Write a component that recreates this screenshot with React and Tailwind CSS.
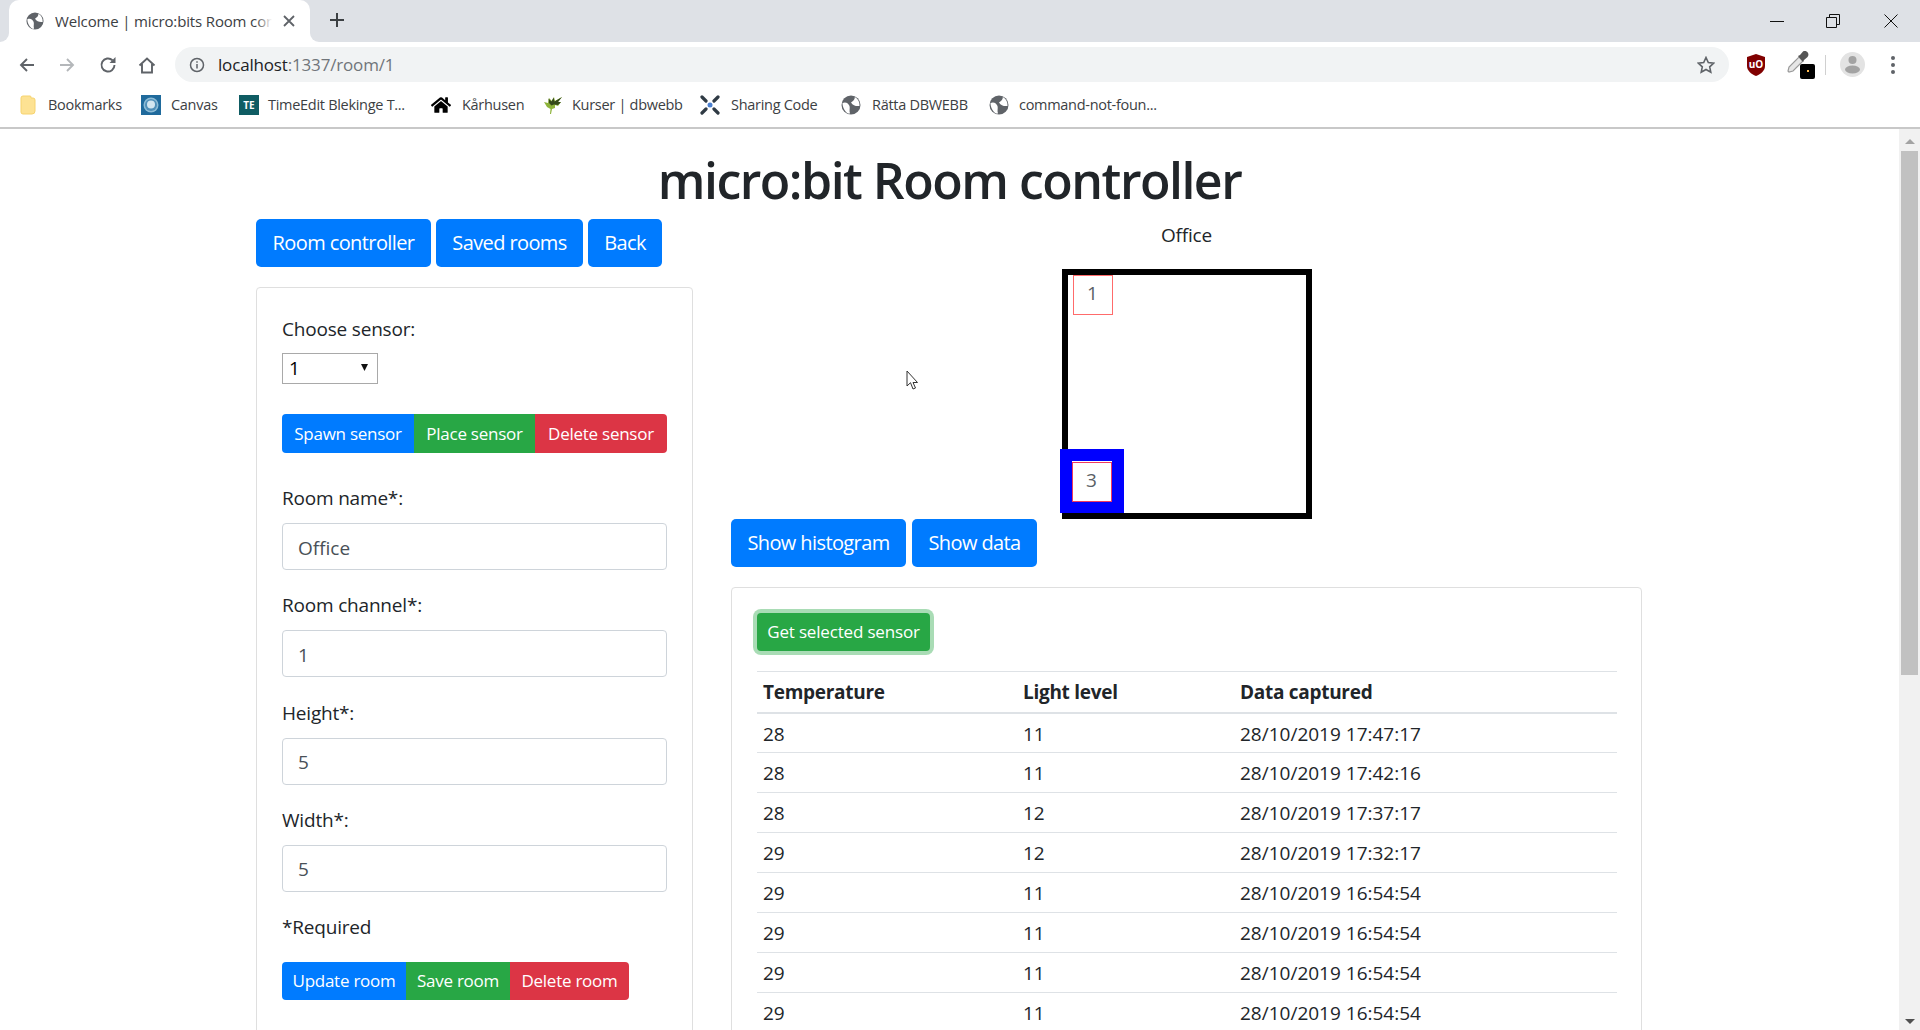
import React from 'react';
import { FaHome } from 'react-icons/fa';

/* ── browser chrome drawings ── */
const ChromeGlobe = ({ className = 'w-5 h-5' }) => (
  <svg className={className} viewBox="0 0 20 20">
    <circle cx="10" cy="10" r="9.5" fill="#5f6368" />
    <path fill="#fff" d="M1.500 8C5 6.500 7.500 8.500 8.500 11c.7 2.500-.5 4.500.5 7.500l-2 0C4 16.500 1.500 12.500 1.500 8zM10 7.500C12.500 6 14 4 13.800 2c3 1.500 5 5 4.700 9-3.500.5-6.500-.5-8.500-3.500z" />
  </svg>
);

const FolderIcon = () => (
  <svg className="w-4 h-5" viewBox="0 0 16 20">
    <path fill="#fde293" stroke="#f6d36e" strokeWidth="1" d="M1 3a2 2 0 0 1 2-2h7a1 1 0 0 1 1 1v1h2a2 2 0 0 1 2 2v11a3 3 0 0 1-3 3H3a2 2 0 0 1-2-2z" />
  </svg>
);

const CanvasIcon = () => (
  <svg className="w-5 h-5" viewBox="0 0 20 20">
    <rect width="20" height="20" fill="#1f6a9c" />
    <circle cx="10" cy="10" r="7.500" fill="#8dbcd6" />
    <circle cx="10" cy="10" r="6" fill="#4f8fb8" />
    <circle cx="10" cy="9.500" r="4" fill="#d3e6f0" />
  </svg>
);

const TimeEditIcon = () => (
  <div className="w-5 h-5 bg-[#0f5c63] flex items-center justify-center text-white text-[10px] font-bold leading-none">TE</div>
);

const LeafIcon = () => (
  <svg className="w-5 h-5" viewBox="0 0 20 20">
    <path fill="#8db33a" d="M19 2 15 7l3 0-3 4-3-1 0 3-3 1-1 5-1 0 .5-5-3.500-2-3-5 4 1 1-5 3 3 2-4 1 4z" />
    <path fill="#34491a" d="M19 2 15 7l3 0-3 3-4-.5-2.500 1L6 8 5.500 3.500l3 3 2-4 1 4z" />
  </svg>
);

const SharingIcon = () => (
  <svg className="w-5 h-5" viewBox="0 0 20 20">
    <g stroke="#2f3a44" strokeWidth="3.200" strokeLinecap="round">
      <path d="M2 2 6 6M18 2l-4 4M2 18l4-4M18 18l-4-4" />
    </g>
    <circle cx="10" cy="10" r="2.500" fill="#4a7fd0" />
  </svg>
);

const ShieldIcon = () => (
  <svg className="w-[20px] h-[22px]" viewBox="0 0 20 22">
    <path fill="#800000" d="M10 0 19 3v9c0 4.500-4 8-9 10C5 20 1 16.500 1 12V3z" />
    <text x="10" y="13.500" textAnchor="middle" fill="#fff" fontSize="10" fontWeight="700" fontFamily="Open Sans, sans-serif">uO</text>
  </svg>
);

const DropperIcon = () => (
  <div className="relative w-[28px] h-[28px]">
    <svg className="w-[22px] h-[22px]" viewBox="0 0 22 22">
      <path fill="#e6e6e6" stroke="#9a9a9a" strokeWidth="1.200" d="M12 6 16 10 6 20l-4 1-1-1 1-4z" />
      <path fill="#555" d="m11 5 2-1 3-3.500c1.500-1 4-.5 5 1.500s0 3.500-1 4.500L17 9l-1 2z" />
    </svg>
    <div className="absolute right-0 bottom-0 w-[15px] h-[15px] rounded-[2px] bg-black flex items-center justify-center">
      <div className="w-[2px] h-[2px] bg-[#ffb84d]" />
    </div>
  </div>
);

const Avatar = () => (
  <svg className="w-[25px] h-[25px]" viewBox="0 0 25 25">
    <circle cx="12.500" cy="12.500" r="12.500" fill="#e3e3e3" />
    <circle cx="12.500" cy="8" r="4" fill="#a3a3a3" />
    <ellipse cx="12.500" cy="17.500" rx="7.500" ry="4" fill="#a3a3a3" />
  </svg>
);

const NavIcon = ({ d, stroke = '#5f6368', children }) => (
  <svg className="w-[18px] h-[18px]" viewBox="0 0 18 18" fill="none" stroke={stroke} strokeWidth="1.900">
    <path d={d} />
    {children}
  </svg>
);

const bookmarks = [
  { label: 'Bookmarks', icon: <FolderIcon />, width: 'w-[121px]', gap: 'ml-[12px]' },
  { label: 'Canvas', icon: <CanvasIcon />, width: 'w-[98px]', gap: 'ml-[10px]' },
  { label: 'TimeEdit Blekinge T...', icon: <TimeEditIcon />, width: 'w-[192px]', gap: 'ml-[9px]' },
  { label: 'Kårhusen', icon: <FaHome className="w-5 h-5 text-black" />, width: 'w-[112px]', gap: 'ml-[11px]' },
  { label: 'Kurser | dbwebb', icon: <LeafIcon />, width: 'w-[157px]', gap: 'ml-[9px]' },
  { label: 'Sharing Code', icon: <SharingIcon />, width: 'w-[141px]', gap: 'ml-[11px]' },
  { label: 'Rätta DBWEBB', icon: <ChromeGlobe />, width: 'w-[148px]', gap: 'ml-[11px]' },
  { label: 'command-not-foun...', icon: <ChromeGlobe />, width: 'w-[180px]', gap: 'ml-[10px]' },
];

const BrowserChrome = () => (
  <div className="shrink-0 bg-white border-b-2 border-[#c8c8c8]">
    {/* tab strip */}
    <div className="h-[42px] bg-[#dee1e6] flex">
      <div className="w-[9px] bg-white"><div className="h-full bg-[#dee1e6] rounded-br-[9px]" /></div>
      <div className="w-[301px] h-[42px] bg-white rounded-t-[10px] flex items-center pl-[17px]">
        <ChromeGlobe className="w-[18px] h-[18px] shrink-0" />
        <div className="relative ml-[11px] w-[217px] overflow-hidden whitespace-nowrap text-[15px] tracking-[-0.01em] text-[#3c4043]">
          Welcome | micro:bits Room contr
          <div className="absolute right-0 top-0 bottom-0 w-[16px] bg-gradient-to-r from-transparent to-white" />
        </div>
        <svg className="ml-[11px] w-3 h-3 shrink-0" viewBox="0 0 12 12" stroke="#5f6368" strokeWidth="1.800"><path d="m1 1 10 10M11 1 1 11" /></svg>
      </div>
      <div className="flex-1 bg-white">
        <div className="h-full bg-[#dee1e6] rounded-bl-[9px] flex items-center">
          <svg className="ml-[19px] mb-[3px] w-[16px] h-[16px]" viewBox="0 0 16 16" stroke="#3c4043" strokeWidth="2"><path d="M8 1v14M1 8h14" /></svg>
          <div className="ml-auto flex items-center">
            <svg className="w-[14px] h-[14px]" viewBox="0 0 14 14" stroke="#111" strokeWidth="1"><path d="M0 7.500h14" /></svg>
            <svg className="ml-[42px] w-[14px] h-[14px]" viewBox="0 0 14 14" fill="none" stroke="#111" strokeWidth="1"><path d="M.5 3.500h10v10H.5zM3.500 3.500V.5h10v10h-3" /></svg>
            <svg className="ml-[44px] mr-[22px] w-[14px] h-[14px]" viewBox="0 0 14 14" stroke="#111" strokeWidth="1"><path d="m.5.5 13 13M13.500.5l-13 13" /></svg>
          </div>
        </div>
      </div>
    </div>
    {/* toolbar */}
    <div className="h-[43px] pt-[2px] flex items-center">
      <div className="pl-[18px] flex items-center">
        <NavIcon d="M16 9H3M9 3 3 9l6 6" />
        <div className="ml-[22px]"><NavIcon d="M2 9h13M9 3l6 6-6 6" stroke="#b4b7ba" /></div>
        <div className="ml-[23px]">
          <NavIcon d="M15.500 9A6.500 6.500 0 1 1 13.500 4.300">
            <path d="M16.500 1v6h-6z" fill="#5f6368" stroke="none" />
          </NavIcon>
        </div>
        <div className="ml-[21px]"><NavIcon d="M1.500 9.500 9 2.500l7.500 7M4 8v8.500h10V8" /></div>
      </div>
      <div className="ml-[19px] w-[1554px] h-[35px] rounded-full bg-[#f1f3f4] flex items-center pl-[14px]">
        <svg className="w-4 h-4 shrink-0" viewBox="0 0 16 16" fill="none" stroke="#5f6368" strokeWidth="1.500">
          <circle cx="8" cy="8" r="6.500" /><path d="M8 7v4.500M8 4.200v1.600" />
        </svg>
        <div className="ml-[13px] text-[17px] tracking-[-0.01em] text-[#202124]">localhost<span className="text-[#70757a]">:1337/room/1</span></div>
        <svg className="ml-auto mr-[14px] w-[18px] h-[18px]" viewBox="0 0 18 18" fill="none" stroke="#5f6368" strokeWidth="1.600"><path d="m9 1.500 2.300 5 5.400.6-4 3.700 1.100 5.400L9 13.500l-4.800 2.700 1.100-5.400-4-3.700 5.400-.6z" /></svg>
      </div>
      <div className="ml-[17px]"><ShieldIcon /></div>
      <div className="ml-[21px]"><DropperIcon /></div>
      <div className="ml-[10px] w-px h-5 bg-[#d0d0d0]" />
      <div className="ml-[14px]"><Avatar /></div>
      <svg className="ml-[26px] w-1 h-[18px]" viewBox="0 0 4 18" fill="#5f6368"><circle cx="2" cy="2" r="2" /><circle cx="2" cy="9" r="2" /><circle cx="2" cy="16" r="2" /></svg>
    </div>
    {/* bookmarks bar */}
    <div className="h-[42px] pb-[2px] flex items-center pl-[20px]">
      {bookmarks.map((b) => (
        <div key={b.label} className={`${b.width} flex items-center`}>
          {b.icon}
          <span className={`${b.gap} text-[14.500px] tracking-[-0.02em] whitespace-nowrap text-[#3c4043]`}>{b.label}</span>
        </div>
      ))}
    </div>
  </div>
);

const Scrollbar = () => (
  <div className="w-[21px] shrink-0 bg-[#f1f1f1] flex flex-col items-center relative">
    <div className="mt-[10px] w-0 h-0 border-x-[5px] border-x-transparent border-b-[5px] border-b-[#a3a3a3]" />
    <div className="mt-[7px] w-[17px] h-[524px] bg-[#c1c1c1]" />
    <div className="absolute bottom-[6px] w-0 h-0 border-x-[5px] border-x-transparent border-t-[5px] border-t-[#505050]" />
  </div>
);

/* ── page ── */
const Btn = ({ color = 'blue', className = '', children }) => {
  const colors = {
    blue: 'bg-[#007bff]',
    green: 'bg-[#28a745]',
    red: 'bg-[#dc3545]',
  };
  return (
    <button className={`${colors[color]} ${className} text-white whitespace-nowrap`}>{children}</button>
  );
};

const Field = ({ label, value }) => (
  <div className="mb-[22.3px]">
    <label className="block h-[27px] leading-[27px] mb-[11px] tracking-[-0.01em]">{label}</label>
    <input
      defaultValue={value}
      className="block w-full h-[47px] px-[15px] pt-[2px] border border-[#ced4da] rounded-[4px] text-[#495057] text-[19px] outline-none"
    />
  </div>
);

const rows = [
  ['28', '11', '28/10/2019 17:47:17'],
  ['28', '11', '28/10/2019 17:42:16'],
  ['28', '12', '28/10/2019 17:37:17'],
  ['29', '12', '28/10/2019 17:32:17'],
  ['29', '11', '28/10/2019 16:54:54'],
  ['29', '11', '28/10/2019 16:54:54'],
  ['29', '11', '28/10/2019 16:54:54'],
  ['29', '11', '28/10/2019 16:54:54'],
];

const Sensor = ({ n, className }) => (
  <div className={`absolute w-[40px] h-[40px] pb-[3px] bg-white flex items-center justify-center text-[#5a5f66] text-[19px] box-border ${className}`}>{n}</div>
);

const App = () => {
  return (
    <div className="h-[1030px] w-[1920px] overflow-hidden flex flex-col bg-white text-[#212529] text-[19px] font-['Open_Sans',sans-serif]">
      <BrowserChrome />
      <div className="flex-1 min-h-0 flex">
        <div className="flex-1 min-w-0 overflow-hidden relative">
          <h1 className="h-[90px] pt-[20px] text-center text-[50px] leading-[62px] font-semibold tracking-[-0.03em]">micro:bit Room controller</h1>

          <div className="flex gap-[38px] pl-[256px]">
            {/* left column */}
            <div className="w-[437px] shrink-0">
              <div className="flex gap-[5px] text-[20px] tracking-[-0.03em]">
                <Btn className="w-[175px] h-[48px] rounded-[5px]">Room controller</Btn>
                <Btn className="w-[147px] h-[48px] rounded-[5px]">Saved rooms</Btn>
                <Btn className="w-[74px] h-[48px] rounded-[5px]">Back</Btn>
              </div>

              <div className="mt-[20px] border border-[#dfdfdf] rounded-[4px] pt-[28px] px-[25px] pb-[40px]">
                <div className="h-[27px] leading-[27px] tracking-[-0.01em]">Choose sensor:</div>
                <div className="relative mt-[10px] w-[96px] h-[31px]">
                  <select defaultValue="1" className="w-full h-full appearance-none border border-[#a9a9a9] pl-[6px] text-black bg-white outline-none">
                    <option value="1">1</option>
                    <option value="3">3</option>
                  </select>
                  <svg className="absolute right-[10px] top-[11px] w-[7px] h-[7px] pointer-events-none" viewBox="0 0 7 7"><path d="M0 0h7L3.500 7z" fill="#111" /></svg>
                </div>

                <div className="flex mt-[30px] text-[17px] tracking-[-0.015em]">
                  <Btn className="w-[132px] h-[39px] rounded-l-[4px]">Spawn sensor</Btn>
                  <Btn color="green" className="w-[121px] h-[39px]">Place sensor</Btn>
                  <Btn color="red" className="w-[132px] h-[39px] rounded-r-[4px]">Delete sensor</Btn>
                </div>

                <div className="mt-[32px]">
                  <Field label="Room name*:" value="Office" />
                  <Field label="Room channel*:" value="1" />
                  <Field label="Height*:" value="5" />
                  <Field label="Width*:" value="5" />
                </div>

                <div className="h-[27px] mt-[2px] leading-[27px] tracking-[-0.01em]">*Required</div>
                <div className="flex mt-[21px] text-[17px] tracking-[-0.015em]">
                  <Btn className="w-[124px] h-[38px] rounded-l-[4px]">Update room</Btn>
                  <Btn color="green" className="w-[104px] h-[38px]">Save room</Btn>
                  <Btn color="red" className="w-[119px] h-[38px] rounded-r-[4px]">Delete room</Btn>
                </div>
              </div>
            </div>

            {/* right column */}
            <div className="w-[911px] shrink-0">
              <div className="h-[27px] mt-[3px] leading-[27px] text-center tracking-[-0.01em]">Office</div>
              <div className="relative w-[250px] h-[250px] mx-auto mt-[20px] border-[6px] border-black box-border">
                <Sensor n="1" className="left-[5px] top-0 border border-[#ff6b6b]" />
                <div className="absolute -left-[8px] top-[174px] w-[64px] h-[64px] border-[12px] border-[#0000ff]" />
                <Sensor n="3" className="left-[4px] top-[187px] border border-[#f03a5f]" />
              </div>

              <div className="flex gap-[6px] text-[20px] tracking-[-0.03em]">
                <Btn className="w-[175px] h-[48px] rounded-[5px]">Show histogram</Btn>
                <Btn className="w-[125px] h-[48px] rounded-[5px]">Show data</Btn>
              </div>

              <div className="mt-[20px] border border-[#dfdfdf] rounded-[4px] pt-[25px] px-[25px] pb-[40px]">
                <Btn color="green" className="w-[173px] h-[38px] rounded-[4px] ring-4 ring-[#28a745]/40 text-[17px] tracking-[-0.01em]">Get selected sensor</Btn>
                <table className="mt-[20px] w-[860px] table-fixed border-collapse">
                  <colgroup>
                    <col className="w-[260px]" />
                    <col className="w-[217px]" />
                    <col />
                  </colgroup>
                  <thead>
                    <tr className="h-[41px] border-t border-b-2 border-[#dee2e6]">
                      <th className="text-left font-bold px-[6px] pt-[1px] tracking-[-0.015em]">Temperature</th>
                      <th className="text-left font-bold px-[6px] pt-[1px] tracking-[-0.015em]">Light level</th>
                      <th className="text-left font-bold px-[6px] pt-[1px] tracking-[-0.015em]">Data captured</th>
                    </tr>
                  </thead>
                  <tbody>
                    {rows.map((r, i) => (
                      <tr key={i} className="h-[40px] border-b border-[#dee2e6]">
                        {r.map((c, j) => <td key={j} className="px-[6px] pt-[2px]">{c}</td>)}
                      </tr>
                    ))}
                  </tbody>
                </table>
              </div>
            </div>
          </div>

          {/* mouse pointer */}
          <svg className="absolute left-[906px] top-[241px] w-[13px] h-[21px]" viewBox="0 0 13 21">
            <path d="M1 1v15l3.500-3.300L7 19l2.500-1-2.500-5.500h4.500z" fill="#fff" stroke="#333" strokeWidth="1" />
          </svg>
        </div>
        <Scrollbar />
      </div>
    </div>
  );
};

export default App;
